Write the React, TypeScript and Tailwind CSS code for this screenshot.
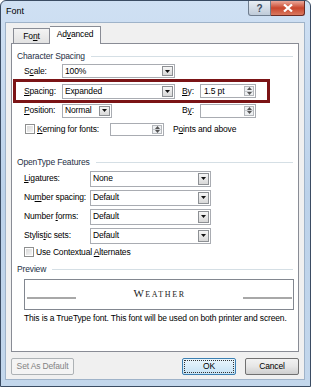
import React from 'react';

const font = { fontFamily: '"Liberation Sans", Arial, sans-serif' };

const Arrow = () => (
  <svg width="5" height="3" viewBox="0 0 5 3">
    <path d="M0 0H5L2.5 3Z" fill="#111" />
  </svg>
);

const Combo = ({ value, w, h }: { value: string; w: string; h: string }) => (
  <div className={`flex ${w} ${h} border border-[#a9acb2] bg-white`}>
    <div className="flex flex-1 items-center pl-[2px]">{value}</div>
    <div className="my-[1px] mr-[1px] flex w-[11px] items-center justify-center border border-[#8d9094] bg-gradient-to-b from-[#f6f6f6] to-[#d8d8d8]">
      <Arrow />
    </div>
  </div>
);

const Spin = ({ value, w, h }: { value: string; w: string; h: string }) => (
  <div className={`flex ${w} ${h} border border-[#a9acb2] bg-white`}>
    <div className="flex flex-1 items-center pl-[3px]">{value}</div>
    <div className="my-[1px] mr-[1px] flex w-[10px] flex-col border border-[#b5b8bc] bg-[#eef0f2]">
      <div className="flex flex-1 items-center justify-center border-b border-[#c8cbcf]">
        <svg width="5" height="3" viewBox="0 0 5 3">
          <path d="M0 3H5L2.5 0Z" fill="#555" />
        </svg>
      </div>
      <div className="flex flex-1 items-center justify-center">
        <svg width="5" height="3" viewBox="0 0 5 3">
          <path d="M0 0H5L2.5 3Z" fill="#555" />
        </svg>
      </div>
    </div>
  </div>
);

const Check = () => (
  <div className="h-[10px] w-[10px] border border-[#8e8f8f] bg-white p-[1px]">
    <div className="h-full w-full bg-gradient-to-br from-[#d9d9d9] to-[#f4f4f4]" />
  </div>
);

const Header = ({ title }: { title: string }) => (
  <div className="flex h-[14px] items-center pl-[5px] pr-[5px]">
    <span className="mr-[6px] text-[#1e2f45]">{title}</span>
    <div className="h-px flex-1 bg-[#d5dfe5]" />
  </div>
);

const U = ({ c }: { c: string }) => <span className="underline underline-offset-1">{c}</span>;

const openType = [
  { label: <><U c="L" />igatures:</>, value: 'None' },
  { label: <>Nu<U c="m" />ber spacing:</>, value: 'Default' },
  { label: <>Number <U c="f" />orms:</>, value: 'Default' },
  { label: <>Stylis<U c="t" />ic sets:</>, value: 'Default' },
];

export default function App() {
  return (
    <div
      className="flex h-[387px] w-[311px] flex-col overflow-hidden rounded-t-[6px] border border-[#3b4c63] bg-gradient-to-b from-[#cfe0f3] via-[#bcd2ea] to-[#c3d7ec] text-[8.5px] tracking-[-0.15px] text-black"
      style={font}
    >
      {/* title bar */}
      <div className="flex h-[21px] shrink-0 items-start">
        <div className="flex h-full flex-1 items-center pl-[5px] text-[9px] tracking-normal text-black">Font</div>
        <div className="flex h-[15px] w-[23px] items-center justify-center rounded-bl-[3px] border border-t-0 border-[#6f7d8e] bg-gradient-to-b from-[#e9eef4] to-[#bfcbd9] text-[10px] font-bold text-[#3a4a5e]">
          ?
        </div>
        <div className="mr-[5px] flex h-[15px] w-[34px] items-center justify-center rounded-br-[3px] border border-l-0 border-t-0 border-[#6b2a22] bg-gradient-to-b from-[#e9a79a] via-[#c8452c] to-[#d9785f]">
          <svg width="10" height="8" viewBox="0 0 10 8">
            <path d="M1 0.5L9 7.5M9 0.5L1 7.5" stroke="#fff" strokeWidth="2.2" />
          </svg>
        </div>
      </div>

      {/* client */}
      <div className="ml-[4px] flex h-[358px] w-[300px] flex-col border border-[#9fb3c9] bg-[#f0f0f0]">
        {/* tabs */}
        <div className="ml-[7px] mt-[3px] flex h-[17px] items-end">
          <div className="flex h-[15px] w-[37px] items-center justify-center border border-b-0 border-[#898c95] bg-gradient-to-b from-[#f3f3f3] to-[#e2e2e2]">
            Fo<U c="n" />t
          </div>
          <div className="relative z-10 -mb-px flex h-[18px] w-[51px] items-center justify-center border border-b-0 border-l-0 border-[#898c95] bg-white pb-[2px]">
            Ad<U c="v" />anced
          </div>
        </div>

        {/* panel */}
        <div className="ml-[5px] flex h-[309px] w-[288px] flex-col border border-[#898c95] bg-white">
          <div className="mt-[5px]">
            <Header title="Character Spacing" />
          </div>

          <div className="flex h-[16px] items-center pl-[12px]">
            <div className="w-[38px]">S<U c="c" />ale:</div>
            <Combo value="100%" w="w-[113px]" h="h-[14px]" />
          </div>

          <div className="ml-[1px] flex h-[24px] w-[257px] items-center border-[3px] border-[#7b1416] pl-[8px]">
            <div className="w-[38px]"><U c="S" />pacing:</div>
            <Combo value="Expanded" w="w-[113px]" h="h-[15px]" />
            <div className="ml-[7px] w-[18px]"><U c="B" />y:</div>
            <Spin value="1.5 pt" w="w-[56px]" h="h-[14px]" />
          </div>

          <div className="flex h-[15px] items-center pl-[12px]">
            <div className="w-[38px]"><U c="P" />osition:</div>
            <Combo value="Normal" w="w-[50px]" h="h-[14px]" />
            <div className="ml-[70px] w-[18px]">B<U c="y" />:</div>
            <Spin value="" w="w-[56px]" h="h-[14px]" />
          </div>

          <div className="mt-[4px] flex h-[14px] items-center pl-[13px]">
            <Check />
            <div className="ml-[2px] w-[73px]"><U c="K" />erning for fonts:</div>
            <Spin value="" w="w-[54px]" h="h-[13px]" />
            <div className="ml-[9px]">P<U c="o" />ints and above</div>
          </div>

          <div className="mt-[19px]">
            <Header title="OpenType Features" />
          </div>

          {openType.map((row, i) => (
            <div key={i} className="flex h-[19px] items-center pl-[12px]">
              <div className="w-[66px]">{row.label}</div>
              <Combo value={row.value} w="w-[121px]" h="h-[16px]" />
            </div>
          ))}

          <div className="flex h-[14px] items-center pl-[12px]">
            <Check />
            <div className="ml-[2px]">Use Contextual <U c="A" />lternates</div>
          </div>

          <div className="mt-[3px]">
            <Header title="Preview" />
          </div>

          <div className="ml-[12px] mt-[3px] flex h-[31px] w-[270px] items-end border border-[#828790] pb-[10px]">
            <div className="ml-[2px] h-[2px] w-[49px] bg-[#a8a8a8]" />
            <div
              className="flex-1 text-center text-[11px] leading-none tracking-[1.6px] text-[#222] [font-variant-caps:small-caps]"
              style={{ fontFamily: '"Liberation Serif", "Times New Roman", serif' }}
            >
              Weather
            </div>
            <div className="mr-[1px] h-[2px] w-[49px] bg-[#a8a8a8]" />
          </div>

          <div className="mt-[1px] flex h-[14px] items-center pl-[12px]">
            This is a TrueType font. This font will be used on both printer and screen.
          </div>
        </div>

        {/* buttons */}
        <div className="mt-[6px] flex h-[17px] items-stretch pl-[5px] pr-[5px]">
          <div className="flex w-[63px] items-center justify-center rounded-[2px] border border-[#adb2b5] bg-[#f4f4f4] text-[#838383]">
            Set As Default
          </div>
          <div className="flex-1" />
          <div className="flex w-[54px] rounded-[2px] border border-[#3c7fb1] bg-gradient-to-b from-[#eaf6fd] to-[#c7e3f5] p-[1px]">
            <div className="flex flex-1 items-center justify-center border border-dotted border-[#333]">OK</div>
          </div>
          <div className="ml-[9px] flex w-[54px] items-center justify-center rounded-[2px] border border-[#707070] bg-gradient-to-b from-[#f2f2f2] via-[#e6e6e6] to-[#cfcfcf]">
            Cancel
          </div>
        </div>
      </div>
    </div>
  );
}
